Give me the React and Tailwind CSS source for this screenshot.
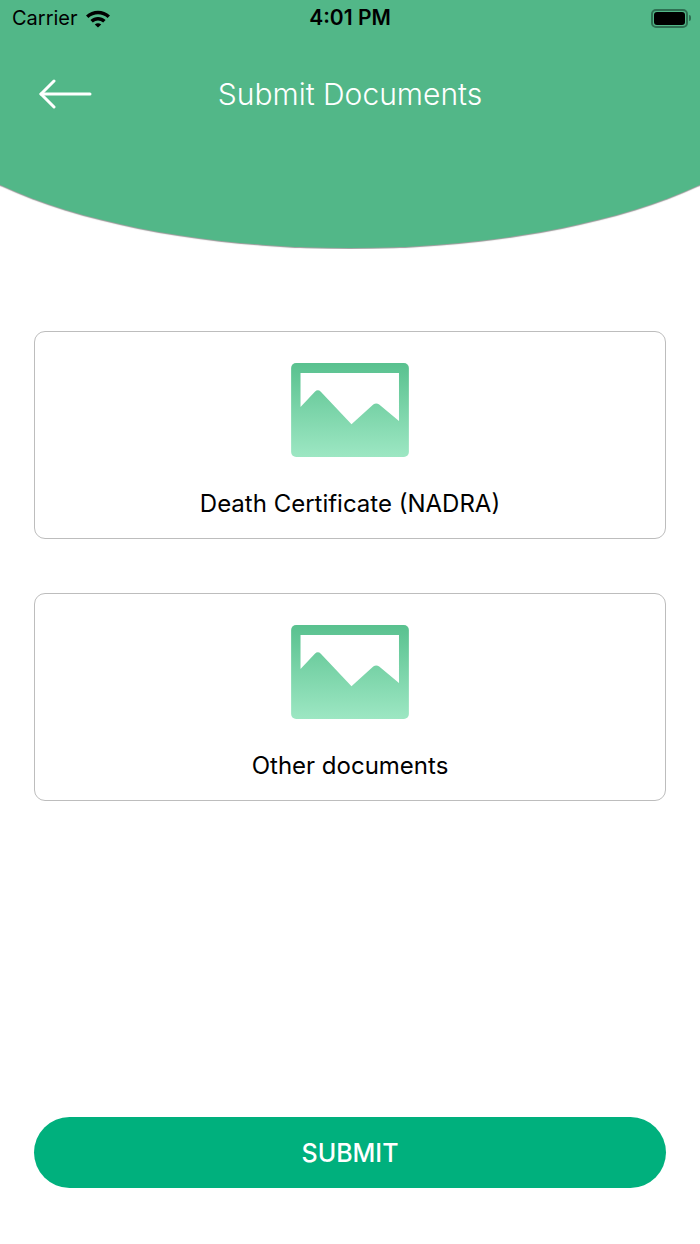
import React from 'react';

const font = "font-['Inter','Liberation_Sans',sans-serif]";

const WifiIcon = () => (
    <svg width="26" height="20" viewBox="0 0 26 20" className="text-black">
        <path d="M1 7.5 C 7.5 1.2, 18.5 1.2, 25 7.5 L 22.6 10 C 17.2 5, 8.8 5, 3.4 10 Z" fill="currentColor" />
        <path d="M5.4 12 C 9.8 8, 16.2 8, 20.6 12 L 18.2 14.4 C 15 11.7, 11 11.7, 7.8 14.4 Z" fill="currentColor" />
        <path d="M9.8 16.4 C 11.8 14.8, 14.2 14.8, 16.2 16.4 L 13 19.5 Z" fill="currentColor" />
    </svg>
);

const BatteryIcon = () => (
    <div className="flex items-center">
        <div className="w-[37px] h-[19px] rounded-[5px] border-2 border-[#2f6f52] p-[1px]">
            <div className="w-full h-full rounded-[3px] bg-black" />
        </div>
        <div className="w-[2px] h-[6px] rounded-r-sm bg-[#2f6f52] ml-[1px]" />
    </div>
);

const BackArrow = () => (
    <svg width="54" height="30" viewBox="0 0 54 30" fill="none" stroke="white" strokeWidth="3" strokeLinecap="round" strokeLinejoin="round">
        <path d="M2 15 H51" />
        <path d="M15 2 L2 15 L15 28" />
    </svg>
);

const ImageIcon = ({ id }) => (
    <svg width="118" height="94" viewBox="0 0 119 95">
        <defs>
            <linearGradient id={id} x1="0" y1="0" x2="0" y2="1">
                <stop offset="0" stopColor="#59c18f" />
                <stop offset="1" stopColor="#9de7c3" />
            </linearGradient>
        </defs>
        <rect width="119" height="95" rx="5" fill={`url(#${id})`} />
        <path d="M9.5 10 H109 V58.5 L89 42 Q86 40 83 42 L61 62 L30 29 Q27 26 24 29 L9.5 44.5 Z" fill="white" />
    </svg>
);

const DocCard = ({ id, label }) => (
    <div className="h-[208px] rounded-[11px] border border-[#bdbdbd] bg-white flex flex-col items-center pt-[31px]">
        <ImageIcon id={id} />
        <div className="mt-[32px] text-[24px] leading-[30px] text-black">{label}</div>
    </div>
);

const App = () => {
    return (
        <div className={`w-[700px] h-[1244px] bg-white flex flex-col overflow-hidden ${font}`}>
            <div className="relative h-[249px] shrink-0 overflow-hidden">
                <div className="absolute left-[-100px] top-[-92px] w-[900px] h-[340px] rounded-[50%] bg-[#52b788] shadow-[0_1px_1px_rgba(0,0,0,0.4)]" />
                <div className="relative flex items-center justify-between h-[36px] pl-3 pr-[9px]">
                    <div className="flex items-center gap-[7px] w-[200px] text-[20px] text-black">
                        Carrier
                        <WifiIcon />
                    </div>
                    <div className="pr-[3px] text-[21px] font-semibold text-black">4:01 PM</div>
                    <div className="w-[200px] flex justify-end">
                        <BatteryIcon />
                    </div>
                </div>
                <div className="relative flex items-center h-[60px] mt-[28px] pl-[39px]">
                    <BackArrow />
                    <div className="absolute inset-x-0 top-[12px] text-center text-[30px] leading-[36px] font-light text-white">Submit Documents</div>
                </div>
            </div>

            <div className="flex flex-col gap-[54px] px-[34px] pt-[82px]">
                <DocCard id="doc-a" label="Death Certificate (NADRA)" />
                <DocCard id="doc-b" label="Other documents" />
            </div>

            <div className="mt-auto px-[34px] pb-[56px]">
                <button className="w-full h-[71px] pt-[2px] rounded-full bg-[#00b07d] text-white text-[25px] font-medium">SUBMIT</button>
            </div>
        </div>
    );
};

export default App;
